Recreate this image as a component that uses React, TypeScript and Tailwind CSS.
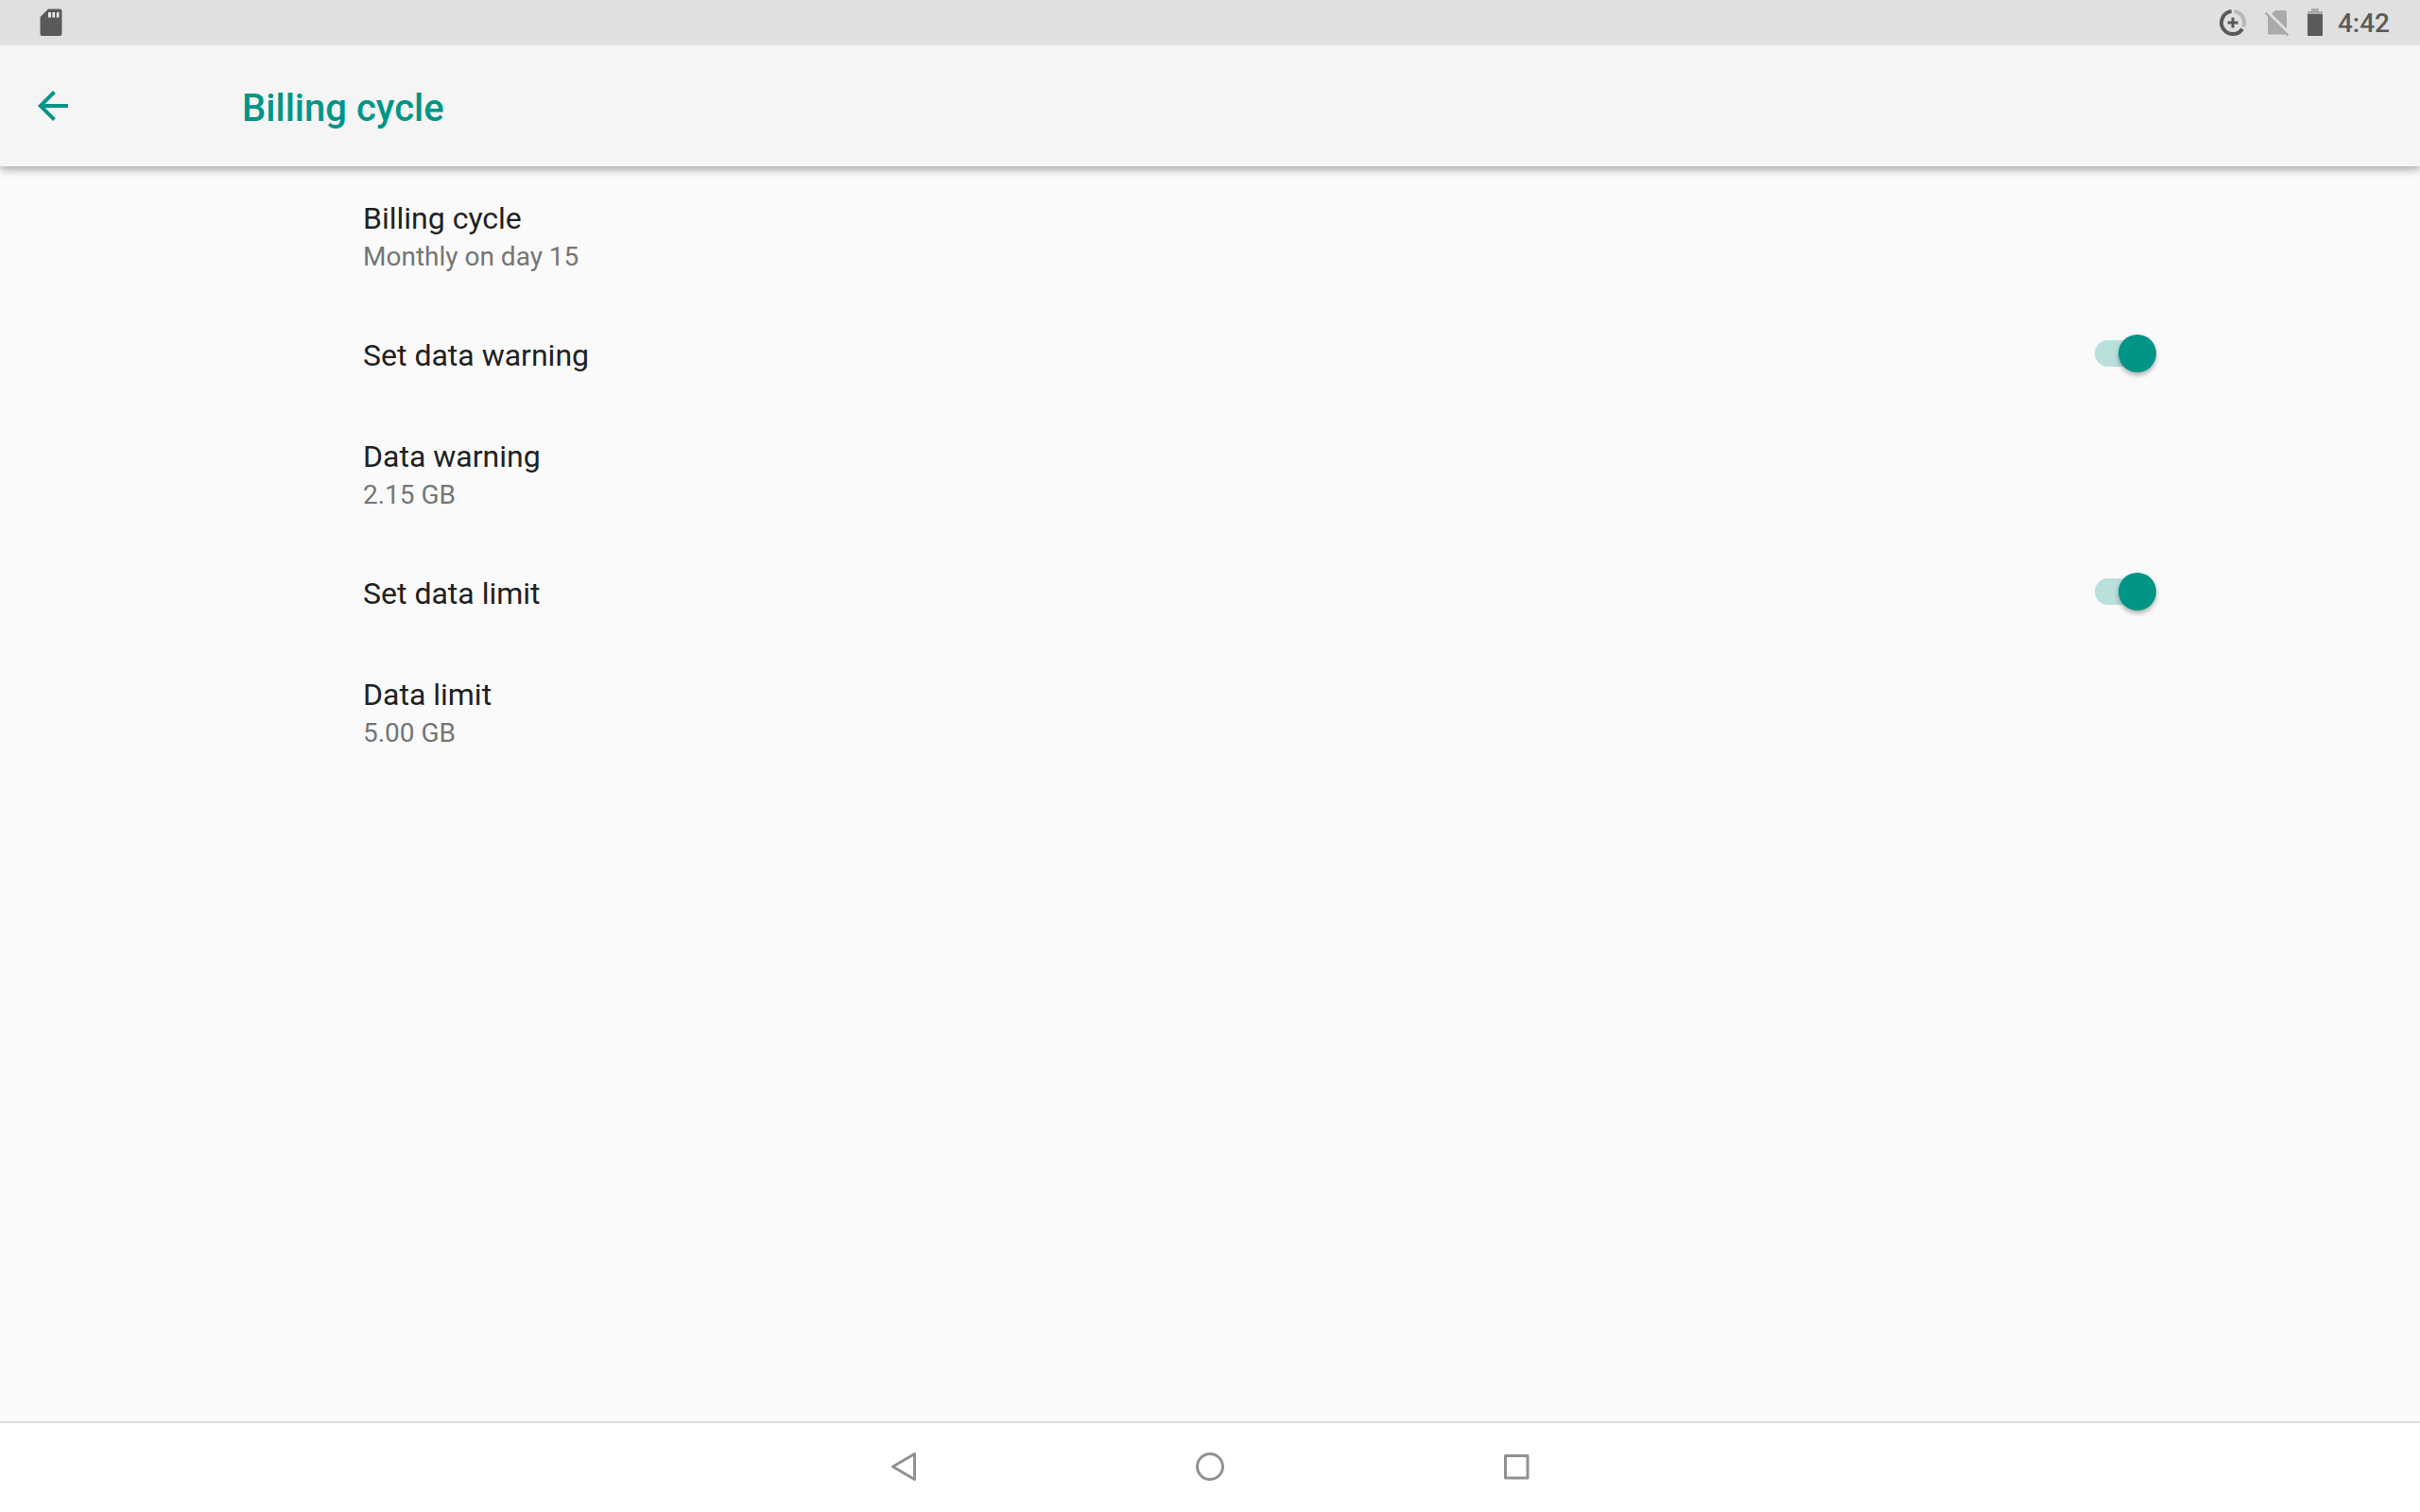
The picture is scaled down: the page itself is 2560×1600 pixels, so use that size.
import React, { useState } from "react";

type Pref = {
  id: string;
  title: string;
  summary?: string;
};

const PREFS: Pref[] = [
  { id: "cycle", title: "Billing cycle", summary: "Monthly on day 15" },
  { id: "set-warning", title: "Set data warning" },
  { id: "warning", title: "Data warning", summary: "2.15 GB" },
  { id: "set-limit", title: "Set data limit" },
  { id: "limit", title: "Data limit", summary: "5.00 GB" },
];

function StatusBar() {
  return (
    <div className="relative z-10 flex h-12 shrink-0 items-center justify-between bg-[#e0e0e0] pr-8 pl-9 text-[#5a5a5a]">
      <svg className="size-9" viewBox="0 0 36 36" fill="currentColor">
        <path d="M15 3.5h12.5a2 2 0 0 1 2 2V30a2 2 0 0 1-2 2h-19a2 2 0 0 1-2-2V12z" />
        <path d="M15 7h3v5.5h-3zM19.4 7h2.7v5.5h-2.7zM23.8 7h2.7v5.5h-2.7z" fill="#e8e8e8" />
      </svg>
      <div className="flex items-center">
        <svg className="mr-[11px] size-9" viewBox="0 0 36 36" fill="none" strokeWidth="4">
          <path d="M19.4 6.1A12 12 0 0 1 29.2 22.4" stroke="#b9b9b9" />
          <path d="M16.6 6.1A12 12 0 1 0 28 24.6" stroke="currentColor" />
          <path d="M18 12.5v11M12.5 18h11" stroke="currentColor" strokeWidth="3" />
        </svg>
        <svg className="mr-1 size-9" viewBox="0 0 36 36" fill="#aaaaaa">
          <path d="M15.8 5H26a2 2 0 0 1 2 2v17.5L12.2 8.7z" />
          <path d="M8 10 27.5 29.5a2 2 0 0 1-1.5 1H10a2 2 0 0 1-2-2z" />
          <path d="M5.5 7.5l24 24" stroke="#aaaaaa" strokeWidth="2.4" />
        </svg>
        <svg className="mr-[6px] size-9" viewBox="0 0 36 36">
          <path d="M10 9V7a1 1 0 0 1 1-1h3V3h8v3h3a1 1 0 0 1 1 1v2z" fill="#aaaaaa" />
          <path d="M10 9h16v22a1 1 0 0 1-1 1H11a1 1 0 0 1-1-1z" fill="currentColor" />
        </svg>
        <span className="pt-[2px] text-[28px] leading-9 font-medium">4:42</span>
      </div>
    </div>
  );
}

function Switch({
  id,
  checked,
  onChange,
}: {
  id: string;
  checked: boolean;
  onChange: () => void;
}) {
  return (
    <span className="relative flex h-10 w-[65px] items-center">
      <input
        id={id}
        type="checkbox"
        role="switch"
        checked={checked}
        onChange={onChange}
        className="peer absolute inset-0 m-0 cursor-pointer appearance-none"
      />
      <span className="pointer-events-none h-7 w-15 rounded-full bg-[#bdbdbd] peer-checked:bg-[#b9e0dc]" />
      <span className="pointer-events-none absolute left-0 size-10 rounded-full bg-[#f1f1f1] shadow-[0_3px_5px_rgba(0,0,0,0.3)] peer-checked:right-0 peer-checked:left-auto peer-checked:bg-[#009587]" />
    </span>
  );
}

function NavBar() {
  return (
    <nav className="flex h-24 shrink-0 items-center justify-center gap-[276px] border-t-2 border-[#dcdcdc] bg-white text-[#919191]">
      <button type="button" aria-label="Back" className="size-12">
        <svg viewBox="0 0 48 48" fill="none" stroke="currentColor" strokeWidth="3" strokeLinejoin="round">
          <path d="M35.5 9.5v27L12.5 23z" />
        </svg>
      </button>
      <button type="button" aria-label="Home" className="size-12">
        <svg viewBox="0 0 48 48" fill="none" stroke="currentColor" strokeWidth="3">
          <circle cx="24" cy="23" r="13.5" />
        </svg>
      </button>
      <button type="button" aria-label="Overview" className="size-12">
        <svg viewBox="0 0 48 48" fill="none" stroke="currentColor" strokeWidth="3" strokeLinejoin="round">
          <path d="M12.5 11.5h23.5v23.5h-23.5z" />
        </svg>
      </button>
    </nav>
  );
}

export default function BillingCycleSettings() {
  const [enabled, setEnabled] = useState<Record<string, boolean>>({
    "set-warning": true,
    "set-limit": true,
  });

  const toggle = (id: string) => {
    setEnabled((prev) => ({ ...prev, [id]: !prev[id] }));
  };

  return (
    <div className="flex min-h-screen flex-col bg-[#fafafa] font-[Roboto,sans-serif]">
      <StatusBar />
      <header className="flex h-32 shrink-0 items-center bg-[#f5f5f5] pl-8 text-[#009587] shadow-[0_4px_8px_rgba(0,0,0,0.3)]">
        <button type="button" aria-label="Navigate up" className="mr-44 size-12">
          <svg viewBox="0 0 24 24" fill="currentColor">
            <path d="M20 11H7.83l5.59-5.59L12 4l-8 8 8 8 1.41-1.41L7.83 13H20v-2z" />
          </svg>
        </button>
        <h1 className="pt-[6px] text-[40px] leading-12 font-medium">Billing cycle</h1>
      </header>

      <main className="grow px-64">
        {PREFS.map((p) =>
          p.summary ? (
            <button
              key={p.id}
              type="button"
              className="block w-full pt-[34px] pb-[30px] pl-32 text-left"
            >
              <span className="block text-[32px] leading-[43px] text-[#212121]">{p.title}</span>
              <span className="block text-[28px] leading-[38px] text-[#757575]">{p.summary}</span>
            </button>
          ) : (
            <div key={p.id} className="flex items-center justify-between pr-[23px] pb-px pl-32">
              <label
                htmlFor={p.id}
                className="grow pt-[34px] pb-[29px] text-[32px] leading-[43px] text-[#212121]"
              >
                {p.title}
              </label>
              <Switch id={p.id} checked={enabled[p.id]} onChange={() => toggle(p.id)} />
            </div>
          )
        )}
      </main>

      <NavBar />
    </div>
  );
}
